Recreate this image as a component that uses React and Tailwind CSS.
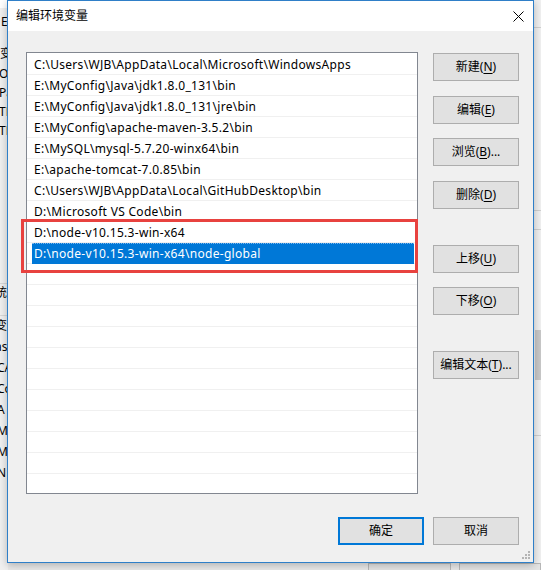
import React from 'react';

const paths = [
  'C:\\Users\\WJB\\AppData\\Local\\Microsoft\\WindowsApps',
  'E:\\MyConfig\\Java\\jdk1.8.0_131\\bin',
  'E:\\MyConfig\\Java\\jdk1.8.0_131\\jre\\bin',
  'E:\\MyConfig\\apache-maven-3.5.2\\bin',
  'E:\\MySQL\\mysql-5.7.20-winx64\\bin',
  'E:\\apache-tomcat-7.0.85\\bin',
  'C:\\Users\\WJB\\AppData\\Local\\GitHubDesktop\\bin',
  'D:\\Microsoft VS Code\\bin',
  'D:\\node-v10.15.3-win-x64',
  'D:\\node-v10.15.3-win-x64\\node-global',
];

const FONT = { fontFamily: '"Noto Sans", "Noto Sans CJK SC", sans-serif' };

// 按鈕：文字 + 帶底線的快捷鍵
function WinButton({ label, hotkey, suffix = '', primary = false, className = '' }) {
  return (
    <div
      className={
        'w-[86px] h-[28px] flex items-center justify-center text-[12px] text-black bg-[#e1e1e1] ' +
        (primary ? 'border-2 border-[#0078d7] ' : 'border border-[#adadad] ') +
        className
      }
    >
      <span>
        {label}
        {hotkey && (
          <>
            (<span className="underline underline-offset-2">{hotkey}</span>)
          </>
        )}
        {suffix}
      </span>
    </div>
  );
}

export default function App() {
  const emptyRows = Array.from({ length: 11 });

  return (
    <div className="relative w-[541px] h-[570px] overflow-hidden bg-[#e9e9e9]" style={FONT}>
      {/* 背後的視窗（只露出左右兩側） */}
      <div className="absolute left-0 top-0 w-[8px] h-full bg-[#f0f0f0] overflow-hidden text-[12px] text-black leading-none">
        <div className="h-[8px] bg-white" />
        <div className="pt-[8px] pl-[1px]">E</div>
        <div className="mt-[20px] pl-[0px]">变</div>
        <div className="mt-[8px] -ml-[1px]">O</div>
        <div className="mt-[7px] -ml-[1px]">Pa</div>
        <div className="mt-[7px] -ml-[1px]">TE</div>
        <div className="mt-[7px] -ml-[1px]">TM</div>
        <div className="mt-[146px] h-px bg-[#d8d8d8]" />
        <div className="mt-[3px] -ml-[5px]">统</div>
        <div className="mt-[16px] h-px bg-[#d8d8d8]" />
        <div className="mt-[4px] -ml-[5px]">变</div>
        <div className="mt-[9px] -ml-[5px]">as</div>
        <div className="mt-[9px] -ml-[3px]">CA</div>
        <div className="mt-[9px] -ml-[3px]">Co</div>
        <div className="mt-[9px] -ml-[3px]">A</div>
        <div className="mt-[9px] -ml-[3px]">M</div>
        <div className="mt-[9px] -ml-[3px]">M</div>
        <div className="mt-[9px] -ml-[3px]">N</div>
      </div>
      <div className="absolute right-0 top-0 w-[8px] h-full bg-[#f0f0f0] overflow-hidden">
        <div className="mt-[27px] h-px bg-[#d0d0d0]" />
        <div className="mt-[182px] h-px bg-[#d0d0d0]" />
        <div className="mt-[18px] h-px bg-[#d0d0d0]" />
        <div className="mt-[100px] ml-[2px] h-[50px] bg-[#c8c8c8]" />
        <div className="mt-[55px] h-px bg-[#d0d0d0]" />
        <div className="mt-[130px] h-px bg-[#d0d0d0]" />
      </div>
      <div className="absolute left-0 bottom-0 w-full h-[7px] flex gap-[8px] pl-[368px]">
        <div className="w-[86px] h-[10px] border border-[#b8b8b8] bg-[#e4e4e4]" />
        <div className="w-[86px] h-[10px] border border-[#b8b8b8] bg-[#e4e4e4]" />
      </div>

      {/* 編輯環境變量 對話框 */}
      <div className="absolute left-[7px] top-0 w-[527px] h-[563px] border border-[#2f7fc8] bg-[#f0f0f0] flex flex-col shadow-[0_2px_8px_rgba(0,0,0,0.25)]">
        {/* 標題列 */}
        <div className="h-[30px] bg-white flex items-center justify-between pl-[8px] pr-[9px]">
          <span className="text-[12px] text-black">编辑环境变量</span>
          <svg width="11" height="11" viewBox="0 0 11 11">
            <path d="M0.5 0.5 L10.5 10.5 M10.5 0.5 L0.5 10.5" stroke="#000" strokeWidth="1" />
          </svg>
        </div>

        {/* 內容 */}
        <div className="flex-1 flex flex-col pl-[18px] pt-[21px] pr-[14px]">
          <div className="flex gap-[15px]">
            {/* 路徑列表 */}
            <div className="relative w-[393px] h-[442px] border border-[#828790] bg-white">
              <div className="h-full overflow-hidden pt-[1px] text-[12px] tracking-[0.3px] text-black">
                {paths.map((p, i) => {
                  const selected = i === paths.length - 1;
                  return (
                    <div key={i} className="h-[21px] border-b border-[#f0f0f0] pl-[5px] pr-[3px]">
                      <div
                        className={
                          'h-[21px] flex items-center pl-[2px] ' +
                          (selected ? 'bg-[#0078d7] text-white border-t border-dotted border-[#7fb8ee]' : '')
                        }
                      >
                        {p}
                      </div>
                    </div>
                  );
                })}
                {emptyRows.map((_, i) => (
                  <div key={'e' + i} className="h-[21px] border-b border-[#f0f0f0]" />
                ))}
              </div>
              {/* 紅框標註 */}
              <div className="absolute left-[-6px] top-[166px] w-[397px] h-[54px] border-[3px] border-[#e8423f] pointer-events-none" />
            </div>

            {/* 右側按鈕 */}
            <div className="flex flex-col pt-[1px]">
              <WinButton label="新建" hotkey="N" />
              <WinButton label="编辑" hotkey="E" className="mt-[15px]" />
              <WinButton label="浏览" hotkey="B" suffix="..." className="mt-[14px]" />
              <WinButton label="删除" hotkey="D" className="mt-[15px]" />
              <WinButton label="上移" hotkey="U" className="mt-[36px]" />
              <WinButton label="下移" hotkey="O" className="mt-[14px]" />
              <WinButton label="编辑文本" hotkey="T" suffix="..." className="mt-[36px]" />
            </div>
          </div>

          {/* 底部按鈕 */}
          <div className="flex justify-end gap-[9px] mt-[23px]">
            <WinButton label="确定" primary />
            <WinButton label="取消" />
          </div>
        </div>

        {/* 右下角拖曳點 */}
        <svg className="absolute right-[3px] bottom-[3px]" width="8" height="8" viewBox="0 0 8 8">
          <g fill="#b4b4b4">
            <rect x="6" y="0" width="2" height="2" />
            <rect x="3" y="3" width="2" height="2" />
            <rect x="6" y="3" width="2" height="2" />
            <rect x="0" y="6" width="2" height="2" />
            <rect x="3" y="6" width="2" height="2" />
            <rect x="6" y="6" width="2" height="2" />
          </g>
        </svg>
      </div>
    </div>
  );
}
